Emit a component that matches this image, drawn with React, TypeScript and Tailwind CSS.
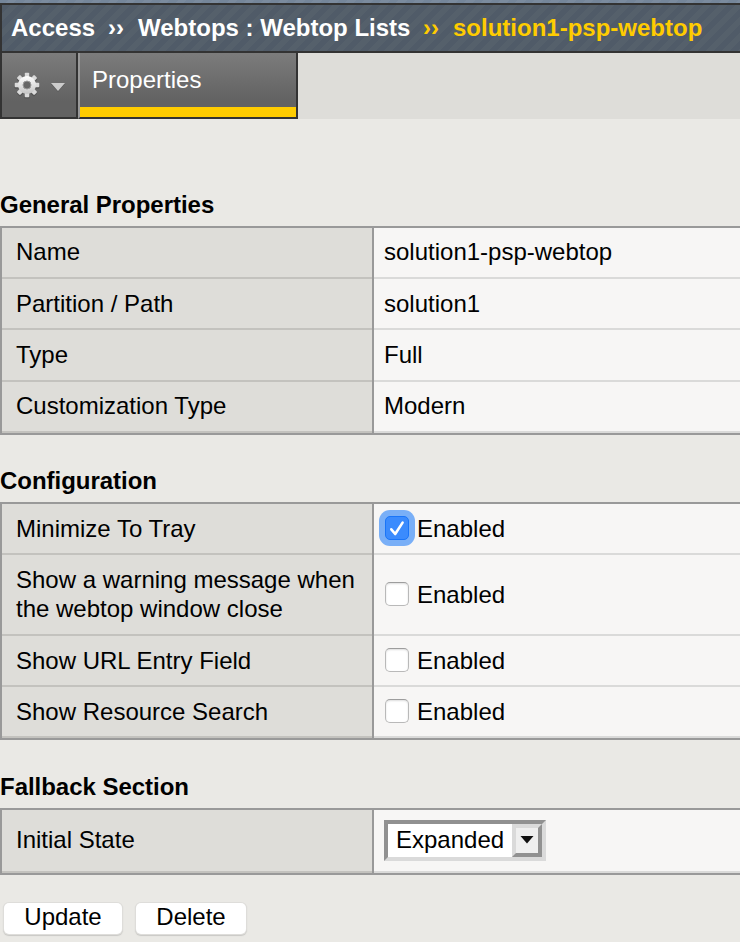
import type { ReactNode } from 'react';

function Row({ label, height, raised = false, children }: { label: ReactNode; height: string; raised?: boolean; children: ReactNode }) {
  const lift = raised ? 'pb-[2px]' : '';
  return (
    <div className={`flex ${height}`}>
      <div className={`flex w-[370px] shrink-0 items-center border-b-2 border-[#c3c2be] bg-[#deddd9] pl-[14px] ${lift}`}>
        <span className="whitespace-nowrap">{label}</span>
      </div>
      <div className="w-[2px] shrink-0 bg-[#999]" />
      <div className="flex min-w-0 flex-1 items-center border-b-2 border-[#dadad9] bg-[#f7f6f5] pl-[10px]">
        <div className={lift}>{children}</div>
      </div>
    </div>
  );
}

function Section({ title, className, children }: { title: string; className: string; children: ReactNode }) {
  return (
    <section className={className}>
      <h2 className="h-[36px] pt-[1px] font-bold leading-[28px] tracking-[-0.03px]">{title}</h2>
      <div className="border-y-2 border-l-2 border-[#999]">{children}</div>
    </section>
  );
}

function Check({ checked = false }: { checked?: boolean }) {
  return (
    <label className="flex items-center">
      {checked ? (
        <span className="ml-[1px] flex size-6 -translate-y-px items-center justify-center rounded-[5px] border border-[#1a75f8] bg-[#3b8bfd] shadow-[0_0_0_6px_#79aff7]">
          <svg width="22" height="22" viewBox="0 0 22 22" className="shrink-0" fill="none" stroke="white" strokeWidth="2.6" strokeLinecap="round" strokeLinejoin="round">
            <path d="M5.3 12.3 9.2 17 16.6 5.6" />
          </svg>
        </span>
      ) : (
        <span className="ml-[1px] size-6 -translate-y-px rounded-[5px] border border-[#b9b9b9] border-t-[#9d9d9d] bg-white shadow-[inset_0_1px_2px_#ddd]" />
      )}
      <span className="ml-2">Enabled</span>
    </label>
  );
}

function Button({ children, width }: { children: string; width: string }) {
  return (
    <button className={`h-[31px] rounded-[5px] bg-white pb-[3px] leading-[28px] shadow-[0_0_0_1px_#deddda,0_1px_1px_1px_#c9c8c5] ${width}`}>
      {children}
    </button>
  );
}

export default function App() {
  return (
    <div className="h-[942px] w-[740px] overflow-hidden bg-[#eae9e5] font-['Liberation_Sans',Arial,sans-serif] text-[24px] leading-[29px] text-black">
      <div className="h-[3px] bg-[repeating-linear-gradient(135deg,#75869a_0_6px,#7b8b9e_6px_12px)]" />
      <header className="flex h-[50px] items-center whitespace-pre border-y-2 border-l-2 border-[#333] bg-[repeating-linear-gradient(135deg,#505b68_0_5.7px,#55606b_5.7px_11.4px)] pb-px pl-[9px] font-bold text-white">
        <span className="w-[97px]">Access</span>
        <span className="w-[30px]">››</span>
        <span className="w-[285px]">Webtops : Webtop Lists</span>
        <span className="w-[30px] text-[#fc0]">››</span>
        <span className="text-[#fc0]">solution1-psp-webtop</span>
      </header>
      <nav className="flex h-[66px] bg-[#deddd9]">
        <div className="flex w-[78px] border-x-2 border-b-2 border-[#333] bg-linear-to-b from-[#7c7c7c] to-[#626262] to-75%">
          <svg width="74" height="64" viewBox="0 0 74 64">
            <defs>
              <linearGradient id="gear" x1="0" y1="0" x2="0" y2="1">
                <stop offset="0" stopColor="#fff" />
                <stop offset="1" stopColor="#c4c4c4" />
              </linearGradient>
            </defs>
            <g transform="translate(25 32)">
              {[0, 45, 90, 135].map((angle) => (
                <rect key={`s${angle}`} x="-2.8" y="-11.5" width="5.6" height="25" rx="1.5" transform={`rotate(${angle} 0 1)`} fill="#555" />
              ))}
              {[0, 45, 90, 135].map((angle) => (
                <rect key={angle} x="-2.3" y="-12.3" width="4.6" height="24.6" rx="1" transform={`rotate(${angle})`} fill="#dadada" />
              ))}
              <circle r="9" fill="url(#gear)" />
              <circle r="4" fill="#666" stroke="#999" strokeWidth="1" />
            </g>
            <path d="M49 31H63L56 39Z" fill="#5a5a5a" />
            <path d="M49 30H63L56 38Z" fill="#ccc" />
          </svg>
        </div>
        <div className="flex w-[220px] flex-col border-b-2 border-l-2 border-r-2 border-b-[#333] border-l-[#999] border-r-[#333] bg-linear-to-b from-[#7c7c7c] to-[#626262] to-75% text-white">
          <span className="h-[54px] pl-3 pt-[12px]">Properties</span>
          <span className="h-[10px] bg-[#fc0]" />
        </div>
      </nav>
      <Section title="General Properties" className="mt-[71px]">
        <Row height="h-[51px]" raised label="Name">solution1-psp-webtop</Row>
        <Row height="h-[51px]" label="Partition / Path">solution1</Row>
        <Row height="h-[52px]" raised label="Type">Full</Row>
        <Row height="h-[51px]" raised label="Customization Type">Modern</Row>
      </Section>
      <Section title="Configuration" className="mt-[31px]">
        <Row height="h-[51px]" label="Minimize To Tray"><Check checked /></Row>
        <Row height="h-[81px]" label={<span className="block pb-[2px]">Show a warning message when<br />the webtop window close</span>}><Check /></Row>
        <Row height="h-[51px]" label="Show URL Entry Field"><Check /></Row>
        <Row height="h-[51px]" label="Show Resource Search"><Check /></Row>
      </Section>
      <Section title="Fallback Section" className="mt-[32px]">
        <Row height="h-[63px]" label={<span className="block pb-[2px]">Initial State</span>}>
          <div className="flex h-[41px] w-[162px] border-4 border-[#dadada] border-l-[#919191] border-t-[#919191] bg-white">
            <span className="w-[124px] pl-2 leading-[32px]">Expanded</span>
            <span className="flex h-[33px] w-[30px] items-center justify-center border-4 border-[#dadada] border-b-[#919191] border-r-[#919191] bg-[#efefef]">
              <svg width="14" height="8" viewBox="0 0 14 8" className="-translate-y-px"><path d="M0.5 0H13.5L7 7.5Z" fill="#111" /></svg>
            </span>
          </div>
        </Row>
      </Section>
      <div className="flex gap-[14px] pl-[4px] pt-[28px]">
        <Button width="w-[118px]">Update</Button>
        <Button width="w-[110px]">Delete</Button>
      </div>
    </div>
  );
}
